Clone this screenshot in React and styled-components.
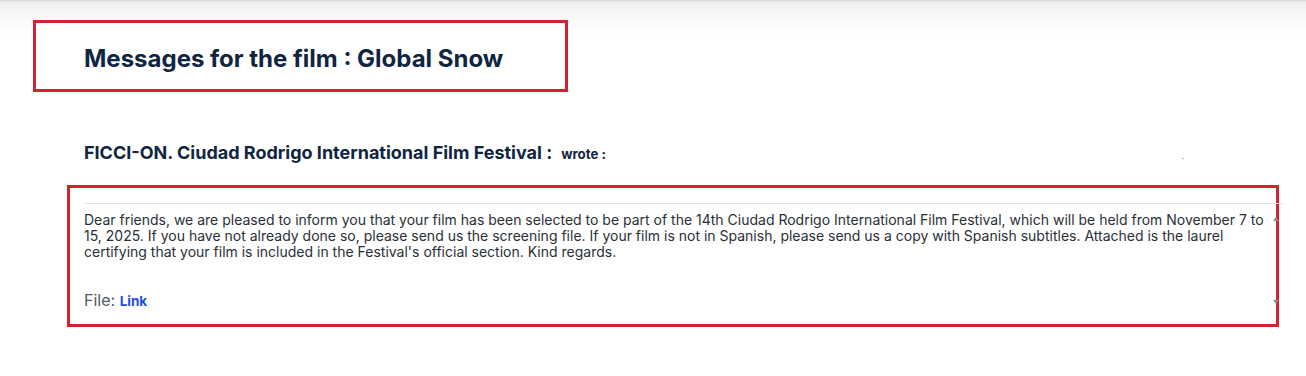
import React from "react";
import styled, { createGlobalStyle } from "styled-components";

const Global = createGlobalStyle`
  html, body { margin: 0; padding: 0; background: #fff; }
  body { font-family: Inter, "Noto Sans", Arial, sans-serif; }
`;

const Page = styled.div`
  min-height: 376px;
  box-sizing: border-box;
  padding-top: 20px;
  background: linear-gradient(to bottom, #d6d6d6 0px, #ececec 2px, #f5f5f5 10px, #ffffff 34px);
`;

const TitleBox = styled.div`
  margin-left: 33px;
  width: 535px;
  height: 72px;
  box-sizing: border-box;
  border: 3px solid #d3232e;
  background: #fff;
  display: flex;
  align-items: center;
  padding: 4px 0 0 48px;
`;

const Title = styled.h1`
  margin: 0;
  font-size: 24px;
  font-weight: 700;
  color: #0f2540;
`;

const Thread = styled.section`
  margin-left: 67px;
  width: 1212px;
`;

const AuthorRow = styled.div`
  margin-top: 49px;
  height: 24px;
  padding-left: 17px;
  display: flex;
  align-items: baseline;
  justify-content: space-between;
`;

const Author = styled.h2`
  margin: 0;
  font-size: 18px;
  font-weight: 700;
  color: #0f2540;
  line-height: 24px;
`;

const Wrote = styled.span`
  margin-left: 9px;
  font-size: 13.3px;
  font-weight: 700;
  color: #0f2540;
`;

const Stamp = styled.span`
  width: 2px;
  height: 1px;
  background: #b8b8b8;
  margin-right: 95px;
  align-self: center;
  margin-top: 10px;
`;

const MessageBox = styled.div`
  margin-top: 20px;
  height: 142px;
  box-sizing: border-box;
  border: 3px solid #d3232e;
  padding: 15px 0 0 14px;
`;

const MessageInner = styled.div`
  margin-right: -7px;
  border-top: 1px solid #e4e4e4;
  display: flex;
`;

const Body = styled.div`
  flex: 1;
  padding-top: 8px;
`;

const Text = styled.p`
  margin: 0;
  font-size: 14px;
  line-height: 16px;
  color: #2a2f36;
`;

const FileRow = styled.div`
  margin-top: 30px;
  font-size: 16px;
  line-height: 20px;
  color: #555b63;
`;

const FileLink = styled.a`
  font-size: 13.5px;
  font-weight: 700;
  color: #1d52d6;
  text-decoration: none;
`;

const Rail = styled.div`
  position: relative;
  z-index: 1;
  width: 14px;
  display: flex;
  flex-direction: column;
  justify-content: space-between;
  align-items: center;
  padding: 13px 0 0;
  height: 87px;
`;

const Arrow = styled.span`
  width: 0;
  height: 0;
  border-left: 3.5px solid transparent;
  border-right: 3.5px solid transparent;
  ${(p) => (p.$down ? "border-top: 4px solid #8c8c8c;" : "border-bottom: 4px solid #8c8c8c;")}
`;

export default function App() {
  return (
    <>
      <Global />
      <Page>
        <TitleBox>
          <Title>Messages for the film : Global Snow</Title>
        </TitleBox>
        <Thread>
          <AuthorRow>
            <Author>
              FICCI-ON. Ciudad Rodrigo International Film Festival :
              <Wrote>wrote :</Wrote>
            </Author>
            <Stamp />
          </AuthorRow>
          <MessageBox>
            <MessageInner>
              <Body>
                <Text>
                  Dear friends, we are pleased to inform you that your film has been selected to be part of the 14th Ciudad Rodrigo International Film Festival, which will be held from November 7 to 15, 2025. If you have not already done so, please send us the screening file. If your film is not in Spanish, please send us a copy with Spanish subtitles. Attached is the laurel certifying that your film is included in the Festival's official section. Kind regards.
                </Text>
                <FileRow>
                  File: <FileLink href="#">Link</FileLink>
                </FileRow>
              </Body>
              <Rail>
                <Arrow />
                <Arrow $down />
              </Rail>
            </MessageInner>
          </MessageBox>
        </Thread>
      </Page>
    </>
  );
}
